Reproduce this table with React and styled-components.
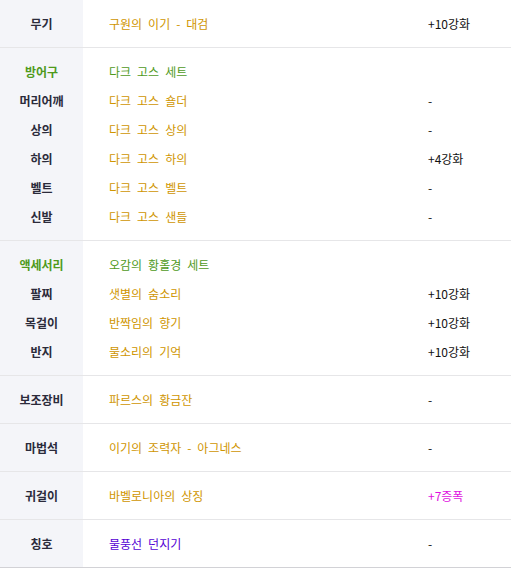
import React from 'react'
import styled, { createGlobalStyle } from 'styled-components'

const GlobalStyle = createGlobalStyle`
  html, body {
    margin: 0;
    padding: 0;
    background: #fff;
  }
  body {
    font-family: 'Noto Sans CJK KR', 'Noto Sans', sans-serif;
    font-size: 12px;
  }
`

const colors = {
  gold: '#cf9500',
  green: '#4f9a1c',
  purple: '#5500d4',
  magenta: '#e010e0',
  label: '#2b2b3b',
  value: '#111',
}

const Table = styled.div`
  width: 511px;
  border-bottom: 1px solid #d2d2d6;
`

const Section = styled.div`
  display: flex;
  flex-direction: column;
  justify-content: center;
  min-height: 47px;
  padding: ${props => (props.group ? '9px 0' : '0')};
  background: linear-gradient(to right, #f4f5f9 83px, #fff 83px);
  & + & {
    border-top: 1px solid #e6e6e8;
  }
`

const Row = styled.div`
  display: grid;
  grid-template-columns: 83px 1fr 83px;
  align-items: center;
  height: 29px;
  line-height: 29px;
`

const Label = styled.div`
  text-align: center;
  font-weight: 700;
  color: ${props => (props.head ? colors.green : colors.label)};
`

const Item = styled.div`
  padding-left: 26px;
  word-spacing: 3.3px;
  color: ${props => colors[props.tone] || colors.gold};
  white-space: nowrap;
`

const Value = styled.div`
  color: ${props => (props.tone ? colors[props.tone] : colors.value)};
  white-space: nowrap;
`

const sections = [
  { rows: [['무기', '구원의 이기 - 대검', '+10강화']] },
  {
    group: true,
    rows: [
      ['방어구', '다크 고스 세트', '', 'head'],
      ['머리어깨', '다크 고스 숄더', '-'],
      ['상의', '다크 고스 상의', '-'],
      ['하의', '다크 고스 하의', '+4강화'],
      ['벨트', '다크 고스 벨트', '-'],
      ['신발', '다크 고스 샌들', '-'],
    ],
  },
  {
    group: true,
    rows: [
      ['액세서리', '오감의 황홀경 세트', '', 'head'],
      ['팔찌', '샛별의 숨소리', '+10강화'],
      ['목걸이', '반짝임의 향기', '+10강화'],
      ['반지', '물소리의 기억', '+10강화'],
    ],
  },
  { rows: [['보조장비', '파르스의 황금잔', '-']] },
  { rows: [['마법석', '이기의 조력자 - 아그네스', '-']] },
  { rows: [['귀걸이', '바벨로니아의 상징', '+7증폭', null, 'magenta']] },
  { rows: [['칭호', '물풍선 던지기', '-', 'title']] },
]

const App = () => (
  <>
    <GlobalStyle />
    <Table>
      {sections.map((s, i) => (
        <Section key={i} group={s.group}>
          {s.rows.map(([label, item, value, kind, valueTone]) => (
            <Row key={label}>
              <Label head={kind === 'head'}>{label}</Label>
              <Item tone={kind === 'head' ? 'green' : kind === 'title' ? 'purple' : 'gold'}>{item}</Item>
              <Value tone={valueTone}>{value}</Value>
            </Row>
          ))}
        </Section>
      ))}
    </Table>
  </>
)

export default App
